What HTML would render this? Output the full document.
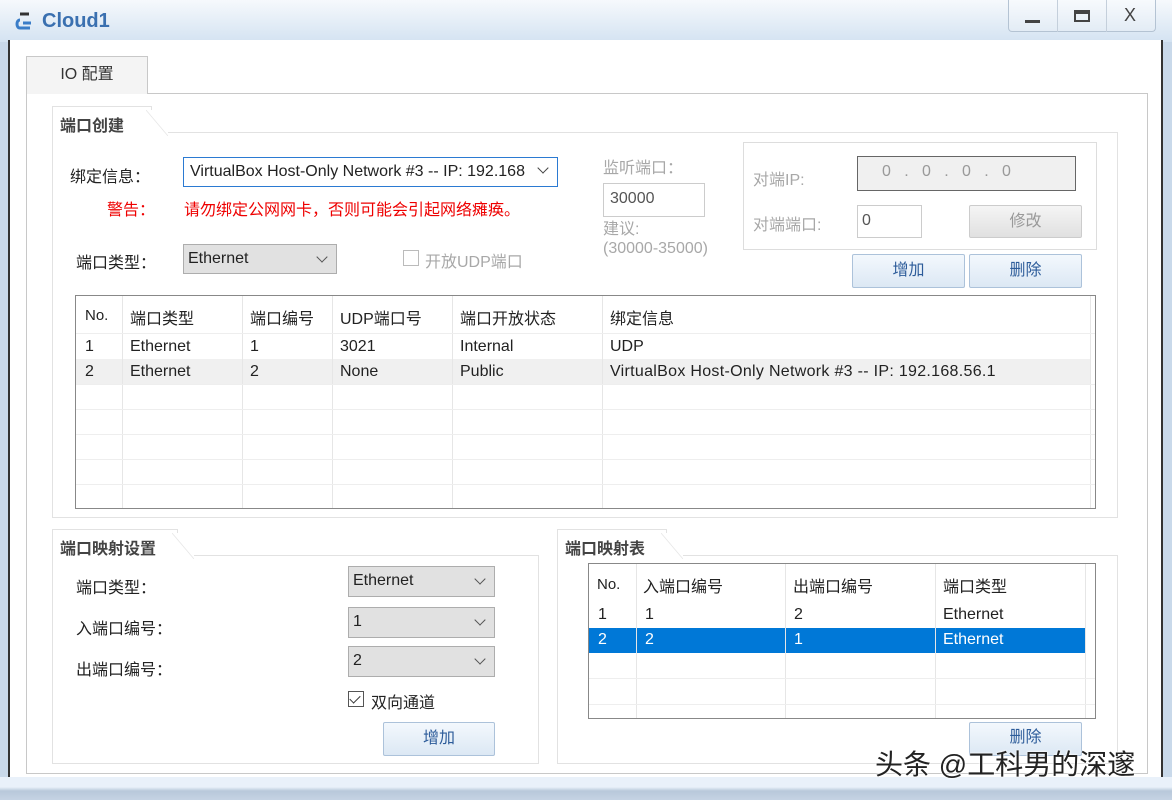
<!DOCTYPE html>
<html><head><meta charset="utf-8"><style>
*{box-sizing:border-box;margin:0;padding:0}
body{width:1172px;height:800px;position:relative;overflow:hidden;background:#c9d9ea;font-family:"Liberation Sans","Noto Sans CJK SC",sans-serif;font-size:16px;color:#222}
.a{position:absolute}
.title{left:0;top:0;width:1172px;height:42px;background:linear-gradient(#f6f9fc,#d4e3f2)}
.client{left:8px;top:40px;width:1155px;height:737px;background:#fff;border-left:2px solid #333;border-right:2px solid #333}
.bottom{left:0;top:777px;width:1172px;height:23px;background:linear-gradient(#e9f1fa 0,#e9f1fa 10px,#b8c8da 14px,#c5d3e3)}
.grp{border:1px solid #e2e2e2;background:#fff}
.lbl{font-weight:bold;font-size:16px;color:#444}
.sel{background:#e1e1e1;border:1px solid #adadad;font-size:16px;padding:2px 0 0 4px;color:#222}
.sel:after{content:"";position:absolute;right:10px;top:8px;width:7px;height:7px;border-right:1px solid #555;border-bottom:1px solid #555;transform:rotate(45deg)}
.btn{border:1px solid #acc2da;background:linear-gradient(#f3f8fd,#dce8f4);color:#2d5c9a;text-align:center;font-size:16px;border-radius:2px}
.gray{color:#a8a8a8}
.tb{border:1px solid #888;background:#fff}
.vl{position:absolute;top:0;bottom:0;width:1px;background:#e6e6e6}
.hl{position:absolute;left:0;right:0;height:1px;background:#eee}
</style></head><body>
<div class="a title"></div>
<svg class="a" style="left:14px;top:10px" width="24" height="24" viewBox="0 0 24 24"><path d="M6 4h9" stroke="#333" stroke-width="3"/><path d="M6 10c-4 0-4 8 0 8h10" stroke="#3a7dc8" stroke-width="3" fill="none"/><path d="M9 13h8" stroke="#3a7dc8" stroke-width="3"/></svg>
<div class="a" style="left:42px;top:10px;font-size:20px;font-weight:bold;color:#3a70b0">Cloud1</div>
<div class="a" style="left:1008px;top:0;width:148px;height:32px;border:1px solid #b4c3d3;border-top:none;border-radius:0 0 4px 4px;background:linear-gradient(#f7fafd,#e3ecf5)"></div>
<div class="a" style="left:1057px;top:0;width:1px;height:32px;background:#c4cfdb"></div>
<div class="a" style="left:1106px;top:0;width:1px;height:32px;background:#c4cfdb"></div>
<div class="a" style="left:1025px;top:20px;width:15px;height:3px;background:#444"></div>
<div class="a" style="left:1074px;top:10px;width:16px;height:12px;border:2px solid #444;border-top-width:4px"></div>
<div class="a" style="left:1124px;top:5px;font-size:18px;color:#444">X</div>
<div class="a client"></div>
<div class="a bottom"></div>
<div class="a" style="left:26px;top:93px;width:1122px;height:681px;border:1px solid #c8c8c8"></div>
<div class="a" style="left:26px;top:56px;width:122px;height:38px;border:1px solid #c8c8c8;border-bottom:none;background:#f4f4f4;text-align:center;line-height:36px;font-size:16px;color:#333">IO 配置</div>
<div class="a grp" style="left:52px;top:132px;width:1066px;height:386px"></div>
<div class="a" style="left:52px;top:106px;width:100px;height:27px;background:#fff;border:1px solid #e2e2e2;border-bottom:none"></div>
<div class="a" style="left:146px;top:110px;width:22px;height:26px;background:linear-gradient(to top right,#fff 48%,#e2e2e2 50%,#fff 52%)"></div>
<div class="a lbl" style="left:60px;top:112px">端口创建</div>
<div class="a" style="left:70px;top:163px;font-size:16px">绑定信息：</div>
<div class="a" style="left:183px;top:157px;width:375px;height:30px;border:1px solid #2b7ad2;padding:5px 0 0 6px;overflow:hidden;white-space:nowrap">VirtualBox Host-Only Network #3 -- IP: 192.168</div>
<div class="a" style="left:530px;top:158px;width:27px;height:28px;background:#fff"></div>
<div class="a" style="left:539px;top:164px;width:8px;height:8px;border-right:1px solid #444;border-bottom:1px solid #444;transform:rotate(45deg)"></div>
<div class="a" style="left:107px;top:196px;font-size:16px;color:#e00">警告：</div>
<div class="a" style="left:184px;top:196px;font-size:16px;color:#e00">请勿绑定公网网卡，否则可能会引起网络瘫痪。</div>
<div class="a" style="left:76px;top:249px;font-size:16px">端口类型：</div>
<div class="a sel" style="left:183px;top:244px;width:154px;height:30px;padding-top:5px">Ethernet</div>
<div class="a" style="left:403px;top:250px;width:16px;height:16px;border:1px solid #bbb"></div>
<div class="a gray" style="left:425px;top:248px;font-size:16px">开放UDP端口</div>
<div class="a gray" style="left:603px;top:154px;font-size:16px">监听端口：</div>
<div class="a" style="left:603px;top:183px;width:102px;height:34px;border:1px solid #ccc;padding:6px 0 0 6px;color:#555">30000</div>
<div class="a gray" style="left:603px;top:220px;line-height:19px">建议:<br>(30000-35000)</div>
<div class="a" style="left:743px;top:142px;width:354px;height:108px;border:1px solid #ddd"></div>
<div class="a gray" style="left:753px;top:166px">对端IP:</div>
<div class="a" style="left:857px;top:156px;width:219px;height:35px;border:1px solid #666;background:#f0f0f0;color:#999;padding:6px 0 0 24px">0&nbsp;&nbsp;&nbsp;.&nbsp;&nbsp;&nbsp;0&nbsp;&nbsp;&nbsp;.&nbsp;&nbsp;&nbsp;0&nbsp;&nbsp;&nbsp;.&nbsp;&nbsp;&nbsp;0</div>
<div class="a gray" style="left:753px;top:211px">对端端口:</div>
<div class="a" style="left:857px;top:205px;width:65px;height:33px;border:1px solid #ccc;padding:6px 0 0 4px;color:#555">0</div>
<div class="a btn" style="left:969px;top:205px;width:113px;height:33px;line-height:31px;color:#999;background:linear-gradient(#f5f5f5,#e0e0e0);border-color:#ccc">修改</div>
<div class="a btn" style="left:852px;top:254px;width:113px;height:34px;line-height:32px">增加</div>
<div class="a btn" style="left:969px;top:254px;width:113px;height:34px;line-height:32px">删除</div>
<div class="a tb" style="left:75px;top:295px;width:1021px;height:214px;overflow:hidden">
 <div class="a" style="left:0;top:63px;width:1015px;height:25px;background:#f0f0f0"></div>
 <div class="vl" style="left:46px"></div><div class="vl" style="left:166px"></div><div class="vl" style="left:256px"></div><div class="vl" style="left:376px"></div><div class="vl" style="left:526px"></div><div class="vl" style="left:1014px"></div>
 <div class="hl" style="top:37px"></div><div class="hl" style="top:88px"></div><div class="hl" style="top:113px"></div><div class="hl" style="top:138px"></div><div class="hl" style="top:163px"></div><div class="hl" style="top:188px"></div>
 <div class="a" style="left:9px;top:11px;font-size:15px">No.</div><div class="a" style="left:54px;top:9px">端口类型</div><div class="a" style="left:174px;top:9px">端口编号</div><div class="a" style="left:264px;top:9px">UDP端口号</div><div class="a" style="left:384px;top:9px">端口开放状态</div><div class="a" style="left:534px;top:9px">绑定信息</div>
 <div class="a" style="left:9px;top:42px">1</div><div class="a" style="left:54px;top:42px">Ethernet</div><div class="a" style="left:174px;top:42px">1</div><div class="a" style="left:264px;top:42px">3021</div><div class="a" style="left:384px;top:42px">Internal</div><div class="a" style="left:534px;top:42px">UDP</div>
 <div class="a" style="left:9px;top:67px">2</div><div class="a" style="left:54px;top:67px">Ethernet</div><div class="a" style="left:174px;top:67px">2</div><div class="a" style="left:264px;top:67px">None</div><div class="a" style="left:384px;top:67px">Public</div><div class="a" style="left:534px;top:67px;letter-spacing:0.3px">VirtualBox Host-Only Network #3 -- IP: 192.168.56.1</div>
</div>
<div class="a grp" style="left:52px;top:555px;width:487px;height:209px"></div>
<div class="a" style="left:52px;top:529px;width:126px;height:27px;background:#fff;border:1px solid #e2e2e2;border-bottom:none"></div>
<div class="a" style="left:172px;top:533px;width:22px;height:26px;background:linear-gradient(to top right,#fff 48%,#e2e2e2 50%,#fff 52%)"></div>
<div class="a lbl" style="left:60px;top:535px">端口映射设置</div>
<div class="a" style="left:76px;top:574px">端口类型：</div>
<div class="a" style="left:76px;top:615px">入端口编号：</div>
<div class="a" style="left:76px;top:656px">出端口编号：</div>
<div class="a sel" style="left:348px;top:566px;width:147px;height:31px;padding-top:5px">Ethernet</div>
<div class="a sel" style="left:348px;top:607px;width:147px;height:31px;padding-top:5px">1</div>
<div class="a sel" style="left:348px;top:646px;width:147px;height:31px;padding-top:5px">2</div>
<div class="a" style="left:348px;top:691px;width:16px;height:16px;border:1px solid #555"></div>
<div class="a" style="left:352px;top:693px;width:6px;height:10px;border-right:1.5px solid #333;border-bottom:1.5px solid #333;transform:rotate(45deg)"></div>
<div class="a" style="left:371px;top:689px">双向通道</div>
<div class="a btn" style="left:383px;top:722px;width:112px;height:34px;line-height:32px">增加</div>
<div class="a grp" style="left:557px;top:555px;width:561px;height:209px"></div>
<div class="a" style="left:557px;top:529px;width:110px;height:27px;background:#fff;border:1px solid #e2e2e2;border-bottom:none"></div>
<div class="a" style="left:661px;top:533px;width:22px;height:26px;background:linear-gradient(to top right,#fff 48%,#e2e2e2 50%,#fff 52%)"></div>
<div class="a lbl" style="left:565px;top:535px">端口映射表</div>
<div class="a tb" style="left:588px;top:563px;width:508px;height:156px;overflow:hidden">
 <div class="a" style="left:0;top:64px;width:497px;height:25px;background:#0078d7"></div>
 <div class="vl" style="left:47px"></div><div class="vl" style="left:196px"></div><div class="vl" style="left:346px"></div><div class="vl" style="left:496px"></div>
 <div class="hl" style="top:114px"></div><div class="hl" style="top:140px"></div>
 <div class="a" style="left:8px;top:12px;font-size:15px">No.</div><div class="a" style="left:54px;top:9px">入端口编号</div><div class="a" style="left:204px;top:9px">出端口编号</div><div class="a" style="left:354px;top:9px">端口类型</div>
 <div class="a" style="left:9px;top:42px">1</div><div class="a" style="left:56px;top:42px">1</div><div class="a" style="left:205px;top:42px">2</div><div class="a" style="left:354px;top:42px">Ethernet</div>
 <div class="a" style="left:9px;top:67px;color:#fff">2</div><div class="a" style="left:56px;top:67px;color:#fff">2</div><div class="a" style="left:205px;top:67px;color:#fff">1</div><div class="a" style="left:354px;top:67px;color:#fff">Ethernet</div>
</div>
<div class="a btn" style="left:969px;top:722px;width:113px;height:34px;line-height:30px">删除</div>
<div class="a" style="left:875px;top:743px;font-size:28px;color:#222;text-shadow:0 0 2px #fff,0 0 2px #fff">头条 @工科男的深邃</div>
</body></html>
